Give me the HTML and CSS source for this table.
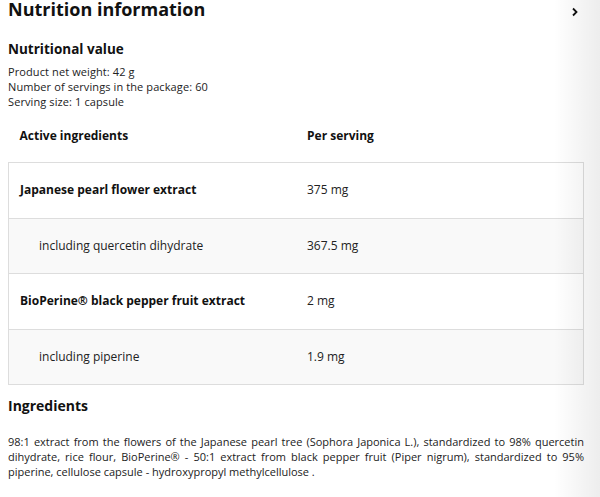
FILE: index.html
```html
<!DOCTYPE html>
<html lang="en">
<head>
<meta charset="utf-8">
<title>Nutrition information</title>
<link rel="stylesheet" href="styles.css">
</head>
<body>
<div class="page">
  <div class="title-row">
    <h1 class="title">Nutrition information</h1>
    <svg class="chevron" width="8" height="10" viewBox="0 0 8 10" aria-hidden="true"><polyline points="2,1.5 5.5,5 2,8.5" fill="none" stroke="#111" stroke-width="1.8"/></svg>
  </div>
  <h2 class="section-title">Nutritional value</h2>
  <div class="facts">
    <p>Product net weight: 42 g</p>
    <p>Number of servings in the package: 60</p>
    <p>Serving size: 1 capsule</p>
  </div>
  <table class="nutri">
    <thead>
      <tr><th>Active ingredients</th><th>Per serving</th></tr>
    </thead>
    <tbody>
      <tr class="main"><td class="name">Japanese pearl flower extract</td><td>375 mg</td></tr>
      <tr class="sub"><td class="name">including quercetin dihydrate</td><td>367.5 mg</td></tr>
      <tr class="main"><td class="name">BioPerine® black pepper fruit extract</td><td>2 mg</td></tr>
      <tr class="sub"><td class="name">including piperine</td><td>1.9 mg</td></tr>
    </tbody>
  </table>
  <h2 class="section-title ingr-title">Ingredients</h2>
  <p class="ingredients">98:1 extract from the flowers of the Japanese pearl tree (Sophora Japonica L.), standardized to 98% quercetin dihydrate, rice flour, BioPerine® - 50:1 extract from black pepper fruit (Piper nigrum), standardized to 95% piperine, cellulose capsule - hydroxypropyl methylcellulose .</p>
</div>
<div class="fade" aria-hidden="true"></div>
</body>
</html>
```
FILE: styles.css
```css
html, body {
  margin: 0;
  padding: 0;
  background: #fff;
}
body {
  font-family: "Open Sans", "DejaVu Sans", sans-serif;
  color: #222;
  font-size: 11px;
  line-height: 15px;
  overflow: hidden;
  height: 497px;
}
.page {
  width: 576px;
  padding: 0 16px 0 8px;
}
.title-row {
  display: flex;
  align-items: flex-start;
  justify-content: space-between;
  height: 20px;
}
.title {
  margin: 0;
  font-size: 18px;
  line-height: 18px;
  font-weight: 700;
  color: #111;
}
.chevron {
  margin-right: 5px;
  margin-top: 7px;
}
.section-title {
  margin: 19px 0 0;
  font-size: 13.5px;
  line-height: 20px;
  font-weight: 700;
  color: #111;
}
.facts {
  margin-top: 5px;
  letter-spacing: 0.1px;
}
.facts p {
  margin: 0;
}
.nutri {
  width: 576px;
  border-collapse: collapse;
  table-layout: fixed;
  margin-top: 19px;
  font-size: 12px;
  line-height: 16px;
}
.nutri th {
  text-align: left;
  font-weight: 700;
  color: #111;
  padding: 0 11px 18px;
}
.nutri td {
  padding: 19px 11px 19.5px;
  border-top: 1px solid #dddddd;
  border-bottom: 1px solid #dddddd;
}
.nutri tbody tr td:first-child {
  border-left: 1px solid #dddddd;
}
.nutri tbody tr td:last-child {
  border-right: 1px solid #dddddd;
}
.nutri tr.main td {
  background: #fff;
}
.nutri tr.main td.name {
  font-weight: 700;
  color: #111;
}
.nutri tr.sub td {
  background: #f9f9f9;
}
.nutri tr.sub td.name {
  padding-left: 30px;
}
.ingr-title {
  font-size: 14px;
  margin-top: 11px;
}
.ingredients {
  margin: 18px 0 0;
  text-align: justify;
}
.fade {
  position: absolute;
  top: 0;
  right: 0;
  width: 46px;
  height: 497px;
  background: linear-gradient(to right, rgba(0,0,0,0), rgba(0,0,0,0.07));
  pointer-events: none;
}
```
